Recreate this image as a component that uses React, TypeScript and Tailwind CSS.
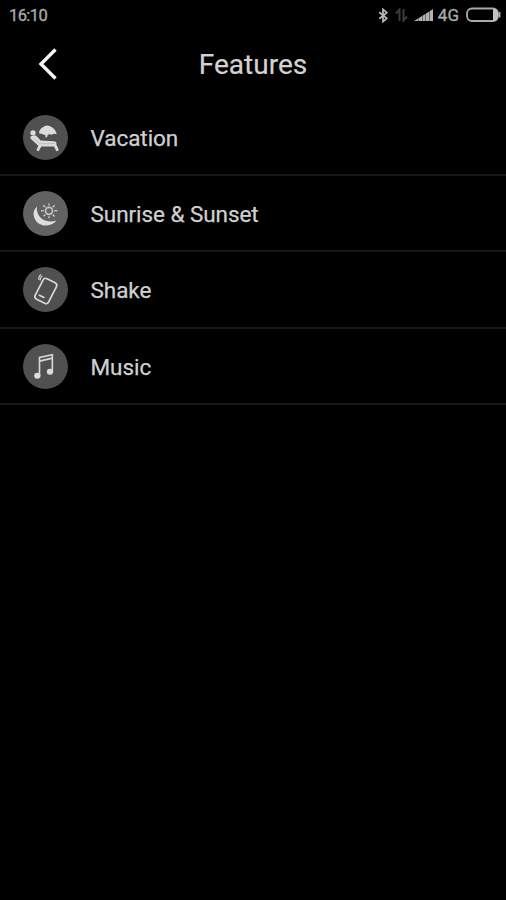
import type { ReactNode } from "react";

function VacationIcon() {
  return (
    <svg viewBox="24 22.5 135 135" className="size-[45px]" fill="#dcdcdc">
      <circle cx="54" cy="76" r="8" />
      <path d="M72 77Q72 66 83 59Q94 51 105 56Q121 62 125 80Q116 77 110 82Q104 79 98 82L97 88L92 91L91 83Q82 78 72 77Z" />
      <path d="M46 87L60 83Q65 84 68 89L77 99L115 101Q124 101 124 106L124 111L132 128L124 131L117 117L79 117L71 131L64 128L70 115L47 94Z" />
      <path d="M57 92L73 109L119 108" fill="none" stroke="#a0a0a0" strokeWidth="1.5" />
    </svg>
  );
}

function SunIcon() {
  return (
    <svg viewBox="24 19.5 135 135" className="size-[45px]" fill="none" stroke="#c4c4c4">
      <path
        d="M66 66Q54 78 56 93Q61 119 86 123Q110 125 125 108Q109 114 93 109Q75 103 68 86Q64 76 66 66Z"
        fill="#dedede"
        stroke="none"
      />
      <circle cx="102" cy="79" r="10.5" strokeWidth="5" />
      <path
        d="M102 63V57M102 95V101M86 79H78M118 79H127M91 68L85 62M113 68L119 62M91 90L86 95M113 90L119 96"
        strokeWidth="4.5"
      />
    </svg>
  );
}

function ShakeIcon() {
  return (
    <svg viewBox="24 22.5 135 135" className="size-[45px]" fill="none" stroke="#d8d8d8" strokeLinecap="round">
      <rect x="70" y="60" width="45" height="69" rx="9" strokeWidth="5" transform="rotate(27 92.5 94.5)" />
      <path d="M73 107L87 114" strokeWidth="5" />
      <path d="M71 59Q71 50 77 46M75 61Q76 54 81 50" strokeWidth="3.5" />
    </svg>
  );
}

function MusicIcon() {
  return (
    <svg viewBox="24 19.5 135 135" className="size-[45px]" fill="#dcdcdc">
      <ellipse cx="67" cy="115" rx="9.5" ry="9" />
      <ellipse cx="105" cy="103" rx="9.5" ry="9" />
      <path d="M73.5 115V60L112 51.5V103M74 71L112 62" fill="none" stroke="#d6d6d6" strokeWidth="5" />
    </svg>
  );
}

function Row({ label, icon, tone = "bg-[#505050]", size }: { label: string; icon: ReactNode; tone?: string; size: string }) {
  return (
    <li className={`flex items-center border-b-2 border-[#181818] pl-[23px] ${size}`}>
      <span className={`size-[45px] shrink-0 overflow-hidden rounded-full ${tone}`}>{icon}</span>
      <span className="ml-[22.5px] pt-[2px] text-[22.5px] leading-none tracking-[-0.06px] text-[#d0d0d0] [-webkit-text-stroke:0.25px_#d0d0d0]">
        {label}
      </span>
    </li>
  );
}

export default function App() {
  return (
    <div className="h-[900px] w-[506px] overflow-hidden bg-black font-['Roboto',sans-serif]">
      <div className="flex h-[30px] items-center justify-between pl-[9px] pr-[5px] text-[16.5px] leading-none text-[#a9a9a9] [-webkit-text-stroke:0.35px_#a9a9a9]">
        <span className="pt-[2px] tracking-[-0.6px]">16:10</span>
        <div className="flex items-center">
          <svg viewBox="0 0 10 16" className="h-[15px] w-[10px]" fill="none" stroke="#b5b5b5" strokeWidth="1.9">
            <path d="M1 4.5L9 11L5 14.5V1.5L9 5L1 11.5" />
          </svg>
          <svg viewBox="0 0 13 14" className="ml-[7px] h-[14px] w-[13px]" fill="none" stroke="#3c3c3c" strokeWidth="2">
            <path d="M4.5 13V1.5L1 5.5M8.5 1V12.5L12 8.5" />
          </svg>
          <svg viewBox="0 0 20 14" className="ml-[6px] h-[14px] w-[20px]" fill="#b2b2b2">
            <path d="M0 13L4 10.5V13ZM4.4 10.2L8 8V13H4.4ZM8.4 7.7L11.6 5.8V13H8.4ZM12 5.4L15.2 3.5V13H12ZM15.6 3.2L19 1V13H15.6Z" />
          </svg>
          <span className="ml-[4px] pt-px text-[17px]">4G</span>
          <svg viewBox="0 0 35 16" className="ml-[7px] h-[16px] w-[35px]" fill="none" stroke="#aaaaaa">
            <rect x="1" y="1.5" width="31" height="12.5" rx="5" strokeWidth="1.8" />
            <path d="M27 2H29Q32 3 32 7.8Q32 13 29 14H27Z" fill="#c2c2c2" stroke="none" />
            <path d="M33.7 5V10.5" strokeWidth="1.5" />
          </svg>
        </div>
      </div>
      <header className="grid h-[70px] grid-cols-[90px_1fr_90px] items-center">
        <svg viewBox="0 0 20 34" className="ml-[38px] mt-[-3px] h-[34px] w-[20px]" fill="none" stroke="#f5f5f5" strokeWidth="3.4">
          <path d="M17.5 2.5L3 17L17.5 31.5" />
        </svg>
        <h1 className="text-center text-[28px] leading-none text-[#d2d2d2] [-webkit-text-stroke:0.2px_#d2d2d2]">Features</h1>
      </header>
      <ul>
        <Row label="Vacation" icon={<VacationIcon />} size="h-[76px]" />
        <Row label="Sunrise & Sunset" icon={<SunIcon />} tone="bg-[#626262]" size="h-[76px]" />
        <Row label="Shake" icon={<ShakeIcon />} size="h-[77px]" />
        <Row label="Music" icon={<MusicIcon />} size="h-[76px]" />
      </ul>
    </div>
  );
}
